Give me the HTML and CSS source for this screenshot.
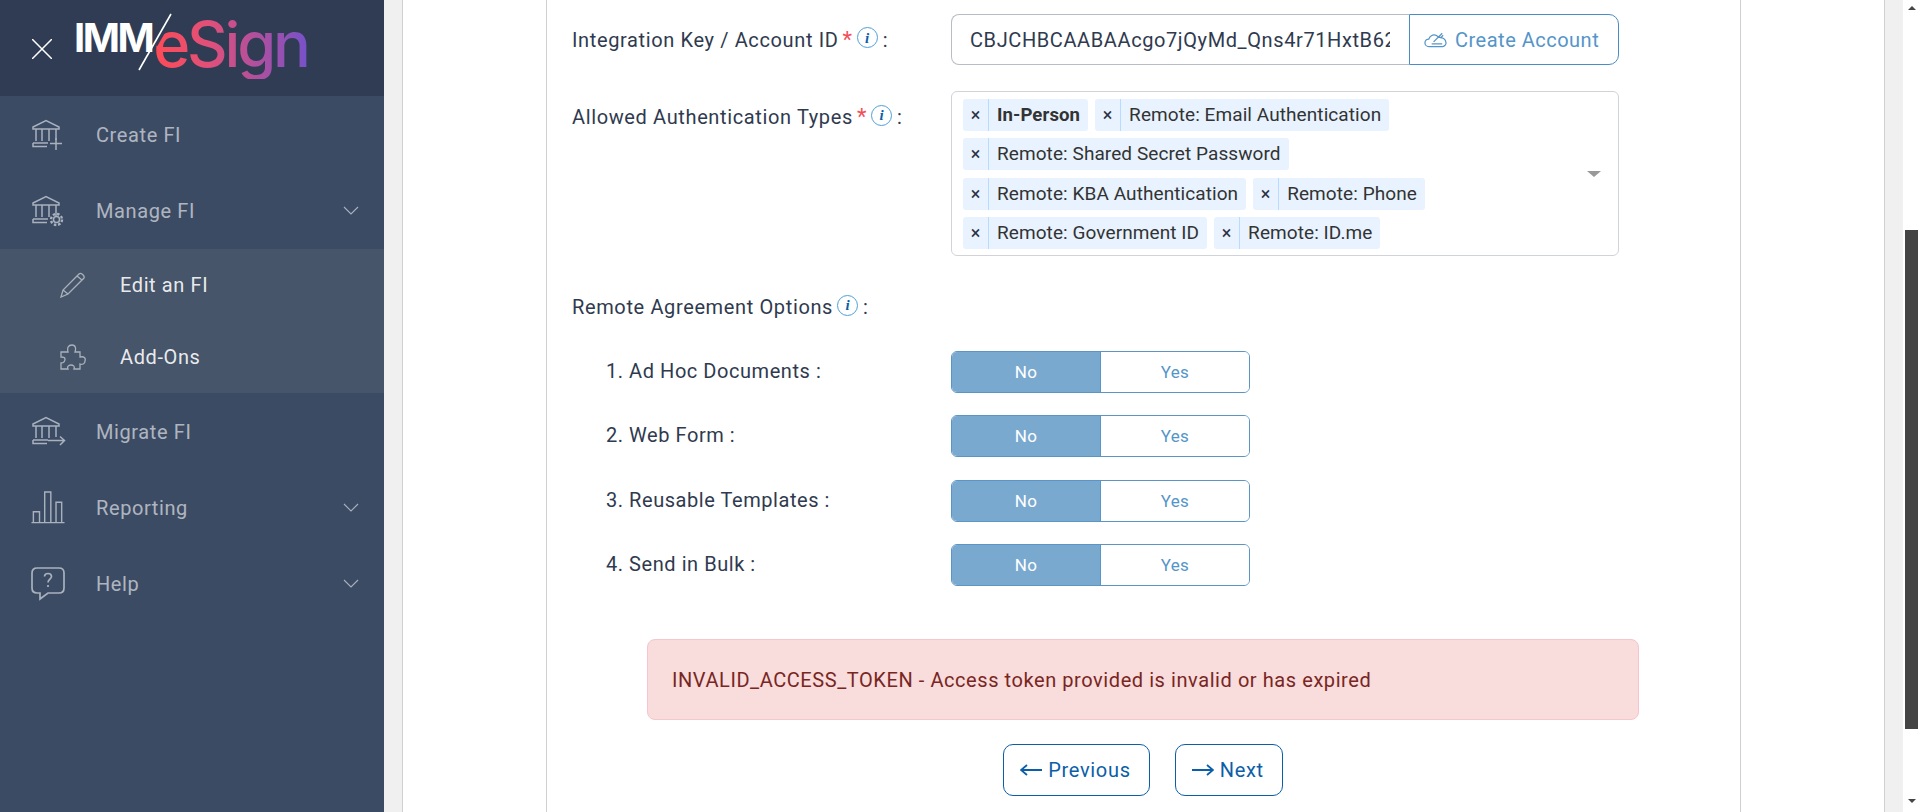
FILE: index.html
```html
<!DOCTYPE html>
<html lang="en">
<head>
<meta charset="utf-8">
<title>IMM eSign</title>
<link rel="stylesheet" href="styles.css">
</head>
<body>
<div class="app">
  <aside class="sidebar">
    <header class="brand">
      <svg class="close-icon" viewBox="0 0 20 20"><path d="M0 0L20 20M20 0L0 20"/></svg>
      <div class="logo">
        <span class="logo-imm">IMM</span><span class="logo-esign">eSign</span>
        <svg class="logo-slash" viewBox="0 0 40 58"><path class="slash-cut" d="M36 1L4 57"/><path d="M33 1L1 57"/></svg>
      </div>
    </header>
    <nav class="nav">
      <a class="nav-item">
        <svg class="nav-icon" viewBox="0 0 32 32"><use href="#bank"/><path d="M18 25.500H30M24 20V32"/></svg>
        <span>Create FI</span>
      </a>
      <a class="nav-item">
        <svg class="nav-icon" viewBox="0 0 32 32"><use href="#bank"/><circle cx="24.500" cy="25.500" r="3"/><circle cx="24.500" cy="25.500" r="5.500" stroke-dasharray="2.500 1.800" stroke-width="2.400"/></svg>
        <span>Manage FI</span>
        <svg class="chev" viewBox="0 0 16 9"><path d="M1 1L8 8L15 1"/></svg>
      </a>
      <div class="subnav">
        <a class="sub-item">
          <svg class="sub-icon" viewBox="0 0 26 26"><path d="M1 25L3 18L19 2C21 0 25 4 24 6L8 22ZM3 18L8 22M17 4L22 8"/></svg>
          <span>Edit an FI</span>
        </a>
        <a class="sub-item">
          <svg class="sub-icon" viewBox="0 0 26 26"><path d="M1 8H8C7 4 8 1 12 1C16 1 16 5 15 8H20V13C24 12 26 14 25 17C25 20 22 21 20 20V25H14C15 22 13 21 11 21C8 21 7 23 8 25H1V19C4 19 5 17 5 15C5 13 3 13 1 13Z"/></svg>
          <span>Add-Ons</span>
        </a>
      </div>
      <a class="nav-item">
        <svg class="nav-icon" viewBox="0 0 32 32"><use href="#bank"/><path d="M16 25.500H32M28 21.500L32.500 25.500L28 30"/></svg>
        <span>Migrate FI</span>
      </a>
      <a class="nav-item">
        <svg class="nav-icon wide-icon" viewBox="0 0 35 35"><path d="M0 33.500H35M2 33.500V22H8.500V33.500M14 33.500V1H20.500V33.500M26 33.500V12H32V33.500"/></svg>
        <span>Reporting</span>
        <svg class="chev" viewBox="0 0 16 9"><path d="M1 1L8 8L15 1"/></svg>
      </a>
      <a class="nav-item">
        <svg class="nav-icon wide-icon help-icon" viewBox="0 0 34 33"><path d="M6 1H28C31 1 33 3 33 6V21C33 24 31 26 28 26H17L9 32V26H6C3 26 1 24 1 21V6C1 3 3 1 6 1Z"/><path d="M13.500 9.500C13.500 5.500 20.500 5.500 20.500 9.500C20.500 12 17 12.500 17 15.500M17 18V20"/></svg>
        <span>Help</span>
        <svg class="chev" viewBox="0 0 16 9"><path d="M1 1L8 8L15 1"/></svg>
      </a>
    </nav>
    <svg class="defs" width="0" height="0">
      <symbol id="bank" viewBox="0 0 32 32" overflow="visible">
        <path d="M1 9L14 2.500L27 9V11H1ZM4 11V23M10 11V23M17 11V23M24 11V22M1 25H16M1 25V28.500H15"/>
      </symbol>
    </svg>
  </aside>

  <main class="main">
    <section class="card">
      <div class="panel">
        <div class="field field-key">
          <label class="label label-main">Integration Key / Account ID<span class="req">*</span><i class="info">i</i><span class="colon">:</span></label>
          <div class="input-group">
            <input class="key-input" type="text" readonly value="CBJCHBCAABAAcgo7jQyMd_Qns4r71HxtB62xKq">
            <button class="create-btn" type="button">
              <svg class="cloud" viewBox="0 0 24 16"><path d="M6 15C3 15 1 13 1 11C1 8.500 3 7 5 7C6 4 9 2 12 3C13 3 14 4 15 5C19 5 23 7 23 11C23 13 21 15 19 15ZM8 12H19M10 10L19 1M17 6L20 3"/></svg>
              Create Account
            </button>
          </div>
        </div>
        <div class="field field-auth">
          <label class="label label-main">Allowed Authentication Types<span class="req">*</span><i class="info">i</i><span class="colon">:</span></label>
          <div class="tagbox">
            <div class="tags">
              <span class="tag"><b class="tag-x">×</b><span class="tag-text tag-strong">In-Person</span></span>
              <span class="tag"><b class="tag-x">×</b><span class="tag-text">Remote: Email Authentication</span></span>
              <span class="tag"><b class="tag-x">×</b><span class="tag-text">Remote: Shared Secret Password</span></span>
              <span class="tag"><b class="tag-x">×</b><span class="tag-text">Remote: KBA Authentication</span></span>
              <span class="tag"><b class="tag-x">×</b><span class="tag-text">Remote: Phone</span></span>
              <span class="tag"><b class="tag-x">×</b><span class="tag-text">Remote: Government ID</span></span>
              <span class="tag"><b class="tag-x">×</b><span class="tag-text">Remote: ID.me</span></span>
            </div>
            <span class="caret"></span>
          </div>
        </div>
        <div class="options-title"><label class="label label-main">Remote Agreement Options<i class="info">i</i><span class="colon">:</span></label></div>
        <div class="option"><span class="label option-label">1. Ad Hoc Documents :</span><div class="toggle"><span class="toggle-on">No</span><span class="toggle-off">Yes</span></div></div>
        <div class="option"><span class="label option-label">2. Web Form :</span><div class="toggle"><span class="toggle-on">No</span><span class="toggle-off">Yes</span></div></div>
        <div class="option"><span class="label option-label">3. Reusable Templates :</span><div class="toggle"><span class="toggle-on">No</span><span class="toggle-off">Yes</span></div></div>
        <div class="option"><span class="label option-label">4. Send in Bulk :</span><div class="toggle"><span class="toggle-on">No</span><span class="toggle-off">Yes</span></div></div>
        <div class="alert">INVALID_ACCESS_TOKEN - Access token provided is invalid or has expired</div>
        <div class="actions">
          <button class="nav-btn" type="button"><svg class="arrow" viewBox="0 0 22 12"><path d="M22 6H1M7 1L1 6L7 11"/></svg>Previous</button>
          <button class="nav-btn" type="button"><svg class="arrow" viewBox="0 0 22 12"><path d="M0 6H21M15 1L21 6L15 11"/></svg>Next</button>
        </div>
      </div>
    </section>
  </main>

  <div class="scrollbar">
    <span class="sb-up"></span>
    <span class="sb-thumb"></span>
    <span class="sb-down"></span>
  </div>
</div>
</body>
</html>
```

FILE: styles.css
```css
* { box-sizing: border-box; }
html, body { margin: 0; height: 100%; overflow: hidden; }
body { font-family: Roboto, "Liberation Sans", sans-serif; color: #2f3a4f; background: #f0f0f0; }
.app { display: flex; height: 812px; }

/* Sidebar */
.sidebar { width: 384px; flex: none; background: #3c4b64; }
.brand { height: 96px; background: #303c54; display: flex; align-items: center; padding-left: 32px; }
.close-icon { width: 20px; height: 20px; margin-top: 2px; fill: none; stroke: #fff; stroke-width: 1.500; }
.logo { position: relative; margin-left: 22px; margin-top: -8px; display: flex; align-items: baseline; height: 70px; width: 260px; }
.logo-imm { font-family: Inter, sans-serif; font-weight: 700; font-size: 40px; line-height: 70px; color: #fff; letter-spacing: -2.500px; transform: translateY(-15px); }
.logo-esign { font-family: Inter, sans-serif; font-weight: 500; font-size: 63px; line-height: 70px; letter-spacing: -3.200px; margin-left: 1px; padding-right: 6px; background: linear-gradient(90deg, #ff4b55 0%, #e0507a 35%, #a650a5 70%, #6f52cf 100%); -webkit-background-clip: text; background-clip: text; color: transparent; }
.logo-slash { position: absolute; left: 64px; top: 4px; width: 40px; height: 58px; fill: none; stroke: #fff; stroke-width: 1.600; }
.slash-cut { stroke: #303c54; stroke-width: 3; stroke-dasharray: 36 100; }
.defs { position: absolute; }
.nav-item { display: flex; align-items: center; height: 76.300px; padding-left: 32px; color: rgba(255,255,255,.6); font-size: 20px; letter-spacing: .6px; }
.nav-item span { flex: 1; padding-top: 2px; }
.nav-icon { width: 32px; height: 32px; margin-right: 32px; flex: none; fill: none; stroke: #a9b1bd; stroke-width: 1.500; overflow: visible; }
.wide-icon { width: 34px; height: 33px; margin-left: -1px; margin-right: 31px; }
.help-icon { stroke-width: 1.700; }
.chev { width: 16px; height: 9px; margin-right: 25px; flex: none; fill: none; stroke: #a9b1bd; stroke-width: 1.100; }
.subnav { background: #465569; }
.sub-item { display: flex; align-items: center; height: 72px; padding-left: 60px; color: rgba(255,255,255,.9); font-size: 20px; letter-spacing: .6px; }
.sub-icon { width: 26px; height: 26px; margin-right: 34px; flex: none; fill: none; stroke: #a9b1bd; stroke-width: 1.300; }

/* Main */
.main { flex: 1; min-width: 0; padding: 0 18px; display: flex; }
.card { flex: 1; background: #fff; border: solid #d0d0d0; border-width: 0 1px; padding: 0 143px; display: flex; }
.panel { flex: 1; border: solid #d0d0d0; border-width: 0 1px; padding: 14px 0 0 25px; }
.field { display: grid; grid-template-columns: 379px 668px; }
.field-key { height: 51px; align-items: center; }
.field-auth { margin-top: 26px; }
.label { font-size: 20px; letter-spacing: .55px; color: #2f3a4f; line-height: 24px; display: flex; align-items: center; }
.label-main { letter-spacing: .63px; }
.field-auth .label { margin-top: 14px; align-self: start; }
.req { color: #f0505a; font-size: 22px; margin-left: 4px; }
.info { display: inline-flex; align-items: center; justify-content: center; width: 21px; height: 21px; margin-left: 4px; border: 1px solid #4f9fd6; border-radius: 50%; font-family: "Liberation Serif", serif; font-weight: 700; font-size: 15px; color: #0b5ea8; letter-spacing: 0; margin-top: -4px; }
.colon { margin-left: 5px; }

.input-group { display: flex; height: 51px; }
.key-input { width: 458px; height: 51px; border: 1px solid #b8bcc4; border-right: 0; border-radius: 8px 0 0 8px; padding: 0 19px 0 18px; font: 20px Roboto, sans-serif; letter-spacing: .6px; color: #2f3a4f; outline: 0; }
.create-btn { flex: 1; display: flex; align-items: center; border: 1px solid #4a8cc4; border-radius: 0 10px 10px 0; background: #fff; color: #5495c9; font: 20px Roboto, sans-serif; letter-spacing: .5px; padding: 0 0 0 14px; }
.cloud { width: 23px; height: 16px; margin-right: 8px; fill: none; stroke: #5495c9; stroke-width: 1.300; }

.tagbox { position: relative; height: 165px; border: 1px solid #d0d3d8; border-radius: 6px; padding: 7px 70px 7px 11px; }
.tags { display: flex; flex-wrap: wrap; column-gap: 7px; row-gap: 7.300px; }
.tag { display: flex; height: 32px; background: #e8f3ff; border-radius: 3px; font-size: 19px; letter-spacing: .08px; color: #333; line-height: 32px; }
.tag-x { width: 26px; text-align: center; border-right: 1px solid #b8dcff; font-weight: 400; color: #2c3244; font-size: 18px; }
.tag-text { padding: 0 8px; }
.tag-strong { font-weight: 700; font-size: 18.600px; }
.caret { position: absolute; right: 17px; top: 79px; border-style: solid; border-width: 6px 7px 0; border-color: #999 transparent transparent; }

.options-title { margin-top: 39px; height: 24px; }
.option { display: grid; grid-template-columns: 379px 299px; align-items: center; margin-top: 22.330px; height: 42px; }
.options-title + .option { margin-top: 32px; }
.option-label { padding-left: 34px; margin-top: -2px; }
.toggle { display: flex; height: 42px; border: 1px solid #5b95c6; border-radius: 6px; overflow: hidden; font-size: 17px; letter-spacing: .3px; }
.toggle-on { width: 148px; background: #7aa9d0; color: #fff; display: flex; align-items: center; justify-content: center; }
.toggle-off { flex: 1; border-left: 1px solid #5b95c6; color: #5495c9; display: flex; align-items: center; justify-content: center; background: #fff; }

.alert { margin: 53.500px 0 0 75px; width: 992px; height: 81px; display: flex; align-items: center; padding: 1px 24px 0; background: #f9dcdc; border: 1px solid #f5c6cb; border-radius: 8px; color: #78261f; font-size: 20px; letter-spacing: .57px; }
.actions { display: flex; justify-content: center; gap: 25px; margin: 24px 0 0 75px; width: 992px; }
.nav-btn { height: 52px; padding: 0 18px 0 16px; background: #fff; border: 1px solid #0b5ea8; border-radius: 10px; color: #0b5ea8; font: 20px Roboto, sans-serif; letter-spacing: .7px; display: flex; align-items: center; }
.arrow { width: 22px; height: 12px; margin-right: 6px; fill: none; stroke: #0b5ea8; stroke-width: 1.800; }

/* Scrollbar */
.scrollbar { width: 17px; flex: none; background: #fff; display: flex; flex-direction: column; align-items: center; padding-top: 6px; }
.sb-up { border-style: solid; border-width: 0 4px 4px; border-color: transparent transparent #444; }
.sb-thumb { width: 13px; height: 499px; margin-top: 220px; background: #444; }
.sb-down { margin-top: 70px; border-style: solid; border-width: 4px 4px 0; border-color: #444 transparent transparent; }
```
